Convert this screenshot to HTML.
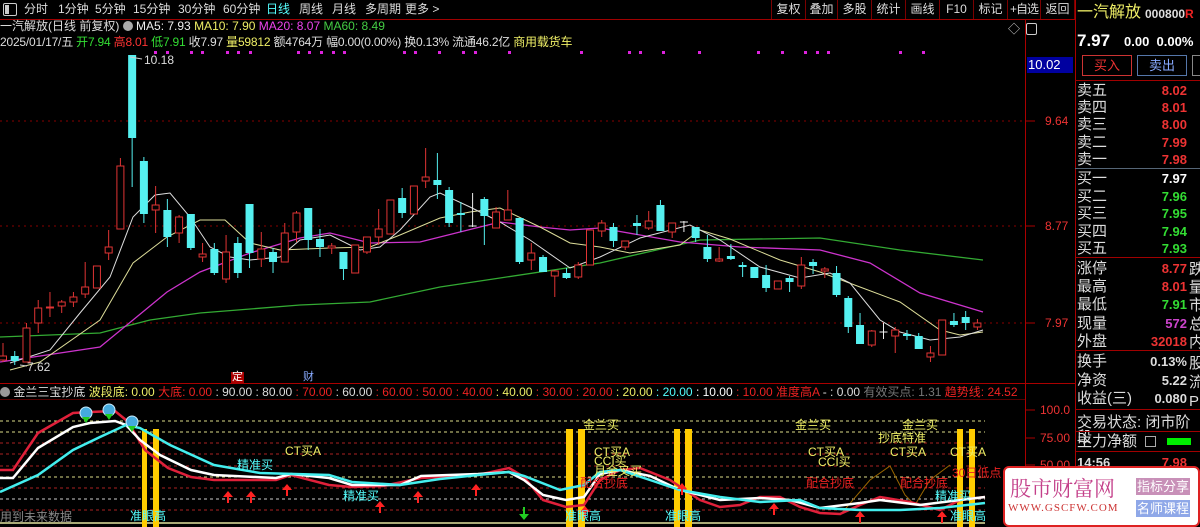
<!DOCTYPE html>
<html><head><meta charset="utf-8">
<style>
*{margin:0;padding:0;box-sizing:border-box}
body{width:1200px;height:527px;background:#000;overflow:hidden;position:relative;font-family:"Liberation Sans","Noto Sans CJK SC",sans-serif;font-size:12px;color:#ddd}
.a{position:absolute;white-space:nowrap;line-height:1}
.tb span{position:absolute;top:3px;font-size:12px;color:#ddd;white-space:nowrap;line-height:1.1}
.btn{position:absolute;top:0;height:19px;border-right:1px solid #7a0000;border-left:1px solid #7a0000;font-size:12px;color:#ddd;text-align:center;line-height:18px;white-space:nowrap;overflow:hidden}
.rp .l{position:absolute;left:1077px;font-size:15px;color:#ddd;line-height:1}
.rp .v{position:absolute;right:13px;font-size:13px;font-weight:bold;line-height:1;text-align:right}
.hl{position:absolute;height:1px;background:#a00000}
</style></head><body>

<svg id="sv" width="1200" height="527" style="position:absolute;left:0;top:0" xmlns="http://www.w3.org/2000/svg"></svg>

<!-- top toolbar -->
<div class="hl" style="left:0;top:19px;width:1075px"></div>
<div class="a" style="left:3px;top:3px;width:14px;height:13px;border:1px solid #ccc;border-radius:2px"></div>
<div class="a" style="left:5px;top:5px;width:4px;height:9px;background:#ccc"></div>
<div class="tb">
<span style="left:24px">分时</span><span style="left:58px">1分钟</span><span style="left:95px">5分钟</span><span style="left:133px">15分钟</span><span style="left:178px">30分钟</span><span style="left:223px">60分钟</span><span style="left:266px;color:#5ff">日线</span><span style="left:299px">周线</span><span style="left:332px">月线</span><span style="left:365px">多周期</span><span style="left:405px">更多 &gt;</span>
</div>
<div class="btn" style="left:771px;width:35px">复权</div>
<div class="btn" style="left:805px;width:33px">叠加</div>
<div class="btn" style="left:837px;width:35px">多股</div>
<div class="btn" style="left:871px;width:35px">统计</div>
<div class="btn" style="left:905px;width:35px">画线</div>
<div class="btn" style="left:939px;width:35px">F10</div>
<div class="btn" style="left:973px;width:35px">标记</div>
<div class="btn" style="left:1007px;width:34px;letter-spacing:-1px">+自选</div>
<div class="btn" style="left:1040px;width:35px">返回</div>

<!-- info lines -->
<div class="a" style="left:0;top:20px;font-size:12px"><span style="color:#ddd">一汽解放(日线 前复权)</span> <span style="display:inline-block;width:10px;height:10px;border-radius:50%;background:#aaa;vertical-align:-1px"></span> <span style="color:#eee">MA5: 7.93</span> <span style="color:#ee6">MA10: 7.90</span> <span style="color:#e4e">MA20: 8.07</span> <span style="color:#4c4">MA60: 8.49</span></div>
<div class="a" style="left:0;top:36px;font-size:12px;letter-spacing:-0.2px"><span style="color:#ddd">2025/01/17/五</span> <span style="color:#3d3">开7.94</span> <span style="color:#f33">高8.01</span> <span style="color:#3d3">低7.91</span> <span style="color:#ddd">收7.97</span> <span style="color:#ee6">量59812</span> <span style="color:#ddd">额4764万 幅0.00(0.00%) 换0.13% 流通46.2亿</span> <span style="color:#ee6">商用载货车</span></div>
<div class="a" style="left:1008px;top:23px;color:#ccc;font-size:12px">◇</div>
<div class="a" style="left:1026px;top:23px;width:11px;height:12px;border:1px solid #ccc;border-radius:2px"></div>

<!-- chart labels -->
<div class="a" style="left:144px;top:54px;color:#ddd;font-size:12px">10.18</div>
<div class="a" style="left:27px;top:361px;color:#ddd;font-size:12px">7.62</div>
<div class="a" style="left:231px;top:372px;background:#a00;color:#fff;font-size:11px;padding:0 1px">定</div>
<div class="a" style="left:303px;top:372px;color:#8af;font-size:11px">财</div>

<!-- axis -->
<div class="a" style="left:1027px;top:57px;width:46px;height:16px;background:#0000a0;color:#fff;font-size:13px;line-height:16px;padding-left:1px">10.02</div>
<div class="a" style="left:1045px;top:115px;color:#e33;font-size:12px">9.64</div>
<div class="a" style="left:1045px;top:220px;color:#e33;font-size:12px">8.77</div>
<div class="a" style="left:1045px;top:317px;color:#e33;font-size:12px">7.97</div>
<div class="a" style="left:1040px;top:404px;color:#e33;font-size:12px">100.0</div>
<div class="a" style="left:1040px;top:432px;color:#e33;font-size:12px">75.00</div>
<div class="a" style="left:1040px;top:459px;color:#e33;font-size:12px">50.00</div>

<!-- indicator title -->
<div class="a" style="left:0;top:386px;font-size:12px;width:1025px;overflow:hidden"><span style="display:inline-block;width:10px;height:10px;border-radius:50%;background:#999;vertical-align:-1px"></span> <span style="color:#ddd">金兰三宝抄底</span> <span style="color:#ee6">波段底: 0.00</span> <span style="color:#e22">大底: 0.00</span> <span style="color:#ddd">: 90.00 : 80.00</span> <span style="color:#e22">: 70.00</span> <span style="color:#ddd">: 60.00</span> <span style="color:#e22">: 60.00 : 50.00 : 40.00</span> <span style="color:#ee6">: 40.00</span> <span style="color:#e22">: 30.00 : 20.00</span> <span style="color:#ee6">: 20.00</span> <span style="color:#5ff">: 20.00</span> <span style="color:#fff">: 10.00</span> <span style="color:#e22">: 10.00 准度高A</span> <span style="color:#ddd">- : 0.00</span> <span style="color:#777">有效买点: 1.31</span> <span style="color:#e22">趋势线: 24.52</span></div>

<!-- indicator labels -->
<div class="a" style="left:285px;top:445px;color:#ee6">CT买A</div>
<div class="a" style="left:237px;top:459px;color:#5ff">精准买</div>
<div class="a" style="left:343px;top:490px;color:#5ff">精准买</div>
<div class="a" style="left:130px;top:510px;color:#5ff">准眼高</div>
<div class="a" style="left:0;top:511px;color:#888">用到未来数据</div>
<div class="a" style="left:583px;top:419px;color:#ee6">金兰买</div>
<div class="a" style="left:594px;top:446px;color:#ee6">CT买A</div>
<div class="a" style="left:594px;top:455px;color:#ee6">CCI买</div>
<div class="a" style="left:594px;top:465px;color:#ee6">月金叉买</div>
<div class="a" style="left:580px;top:477px;color:#e22">配合抄底</div>
<div class="a" style="left:565px;top:510px;color:#5ff">准眼高</div>
<div class="a" style="left:665px;top:510px;color:#5ff">准眼高</div>
<div class="a" style="left:795px;top:419px;color:#ee6">金兰买</div>
<div class="a" style="left:808px;top:446px;color:#ee6">CT买A</div>
<div class="a" style="left:818px;top:456px;color:#ee6">CCI买</div>
<div class="a" style="left:806px;top:477px;color:#e22">配合抄底</div>
<div class="a" style="left:902px;top:419px;color:#ee6">金兰买</div>
<div class="a" style="left:878px;top:432px;color:#ee6">抄底特准</div>
<div class="a" style="left:890px;top:446px;color:#ee6">CT买A</div>
<div class="a" style="left:900px;top:477px;color:#e22">配合抄底</div>
<div class="a" style="left:950px;top:446px;color:#ee6">CT买A</div>
<div class="a" style="left:952px;top:467px;color:#e22">30日低点</div>
<div class="a" style="left:935px;top:490px;color:#5ff">精准买</div>
<div class="a" style="left:950px;top:510px;color:#5ff">准眼高</div>

<!-- right panel -->
<div class="rp">
<div class="a" style="left:1077px;top:5px;font-size:16px;color:#ee6">一汽解放</div>
<div class="a" style="left:1145px;top:8px;font-size:12px;font-weight:bold;color:#ddd">000800<span style="color:#e22">R</span></div>
<div class="a" style="left:1077px;top:32px;font-size:17px;font-weight:bold;color:#fff">7.97</div>
<div class="a" style="left:1124px;top:35px;font-size:13px;font-weight:bold;color:#fff">0.00&nbsp;&nbsp;0.00%</div>
<div class="a" style="left:1082px;top:55px;width:50px;height:21px;border:1px solid #c33;color:#e33;font-size:13px;text-align:center;line-height:19px">买入</div>
<div class="a" style="left:1137px;top:55px;width:50px;height:21px;border:1px solid #57a;color:#8af;font-size:13px;text-align:center;line-height:19px">卖出</div>
<div class="a" style="left:1192px;top:55px;width:20px;height:21px;border:1px solid #888"></div>
<div class="hl" style="left:1075px;top:80px;width:125px"></div>
<div class="l" style="top:83px">卖五</div><div class="v" style="top:84px;color:#e33">8.02</div>
<div class="l" style="top:100px">卖四</div><div class="v" style="top:101px;color:#e33">8.01</div>
<div class="l" style="top:117px">卖三</div><div class="v" style="top:118px;color:#e33">8.00</div>
<div class="l" style="top:135px">卖二</div><div class="v" style="top:136px;color:#e33">7.99</div>
<div class="l" style="top:152px">卖一</div><div class="v" style="top:153px;color:#e33">7.98</div>
<div class="hl" style="left:1075px;top:168px;width:125px;background:#567"></div>
<div class="l" style="top:171px">买一</div><div class="v" style="top:172px;color:#fff">7.97</div>
<div class="l" style="top:189px">买二</div><div class="v" style="top:190px;color:#3d3">7.96</div>
<div class="l" style="top:206px">买三</div><div class="v" style="top:207px;color:#3d3">7.95</div>
<div class="l" style="top:224px">买四</div><div class="v" style="top:225px;color:#3d3">7.94</div>
<div class="l" style="top:241px">买五</div><div class="v" style="top:242px;color:#3d3">7.93</div>
<div class="hl" style="left:1075px;top:257px;width:125px"></div>
<div class="l" style="top:261px">涨停</div><div class="v" style="top:262px;color:#e33">8.77</div>
<div class="l" style="top:279px">最高</div><div class="v" style="top:280px;color:#e33">8.01</div>
<div class="l" style="top:297px">最低</div><div class="v" style="top:298px;color:#3d3">7.91</div>
<div class="l" style="top:316px">现量</div><div class="v" style="top:317px;color:#c4c">572</div>
<div class="l" style="top:334px">外盘</div><div class="v" style="top:335px;color:#e33">32018</div>
<div class="a" style="left:1189px;top:261px;font-size:15px;line-height:18.2px;color:#ddd">跌<br>量<br>市<br>总<br>内</div>
<div class="hl" style="left:1075px;top:350px;width:125px"></div>
<div class="l" style="top:354px">换手</div><div class="v" style="top:355px;color:#ddd">0.13%</div>
<div class="l" style="top:373px">净资</div><div class="v" style="top:374px;color:#ddd">5.22</div>
<div class="l" style="top:391px">收益(三)</div><div class="v" style="top:392px;color:#ddd">0.080</div>
<div class="a" style="left:1189px;top:354px;font-size:15px;line-height:19px;color:#ddd">股<br>流<br>P</div>
<div class="hl" style="left:1075px;top:409px;width:125px"></div>
<div class="l" style="top:415px">交易状态: 闭市阶段</div>
<div class="hl" style="left:1075px;top:431px;width:125px"></div>
<div class="l" style="top:434px">主力净额</div>
<div class="a" style="left:1145px;top:436px;width:11px;height:11px;border:1px solid #aaa"></div>
<div class="a" style="left:1167px;top:438px;width:24px;height:7px;background:#0e0"></div>
<div class="hl" style="left:1075px;top:451px;width:125px"></div>
<div class="a" style="left:1077px;top:456px;font-size:13px;font-weight:bold;color:#ddd">14:56</div>
<div class="v" style="top:456px;color:#e33">7.98</div>
</div>

<!-- watermark -->
<div class="a" style="left:1003px;top:466px;width:197px;height:61px;background:#fff;border:2px solid #d22;border-radius:6px"></div>
<div class="a" style="left:1010px;top:478px;font-size:21px;color:#c4408a;font-family:'Noto Serif CJK SC','Liberation Serif',serif">股市财富网</div>
<div class="a" style="left:1008px;top:503px;font-size:11px;color:#c33;font-family:'Liberation Serif',serif;letter-spacing:1px">WWW.GSCFW.COM</div>
<div class="a" style="left:1136px;top:478px;width:54px;height:17px;background:#c890b8;color:#fff;font-size:13px;text-align:center;line-height:17px">指标分享</div>
<div class="a" style="left:1136px;top:500px;width:54px;height:17px;background:#8fa8e8;color:#fff;font-size:13px;text-align:center;line-height:17px">名师课程</div>

<script>
var s=[];
function L(x1,y1,x2,y2,c,w,d){s.push('<line x1="'+x1+'" y1="'+y1+'" x2="'+x2+'" y2="'+y2+'" stroke="'+c+'" stroke-width="'+(w||1)+'"'+(d?' stroke-dasharray="'+d+'"':'')+'/>');}
function P(pts,c,w){s.push('<polyline fill="none" stroke="'+c+'" stroke-width="'+(w||1)+'" points="'+pts+'"/>');}
[121,226,323].forEach(function(y){L(0,y,1025,y,'#800','1','2 4');});
L(1025.5,19,1025.5,527,'#a00');L(1075.5,0,1075.5,527,'#a00');
L(0,383.5,1075,383.5,'#a00');L(0,399.5,1025,399.5,'#500');
[121,226,323,410,438,465].forEach(function(y){L(1025,y,1035,y,'#a00');});
[155,167,191,202,227,238,250,298,309,321,333,344,404,415,439,463,475,509,581,629,640,663,699,758,782,805,817,828,900,923].forEach(function(x){s.push('<rect x="'+(x-1)+'" y="51" width="3" height="3" fill="#d2d"/>');});
P('0,337 100,333 150,320 200,313 300,305 370,302 440,287 500,278 600,263 700,240 820,238 900,250 983,260','#3a3',1.3);
P('0,362 100,347 133,320 167,292 200,272 250,253 300,238 330,233 370,243 420,242 460,232 500,222 540,227 570,230 600,228 680,242 740,247 820,250 870,263 920,293 983,312','#c3c',1.3);
P('10,370 40,362 100,320 133,263 167,237 200,220 225,220 250,243 280,250 330,248 370,247 400,235 440,218 470,212 500,208 540,227 570,243 600,247 630,253 680,245 700,230 730,239 780,260 820,272 860,287 900,302 940,330 960,335 983,332','#dd9',1);
P('10,363 50,350 80,313 110,277 133,217 155,195 170,193 190,217 210,247 230,257 250,260 280,257 300,240 330,235 360,250 380,247 400,230 430,197 440,193 470,207 500,222 530,240 570,268 600,257 640,238 690,225 720,240 760,267 800,278 830,273 850,283 880,320 900,332 930,340 960,337 983,330','#ddd',1);
var C=[[356,360,343,362,'r'],[356,361,351,365,'c'],[328,362,323,362,'r'],[308,323,300,333,'r'],[307,308,292,317,'r'],[302,306,300,313,'r'],[297,302,292,307,'r'],[287,294,262,298,'r'],[266,288,266,288,'r'],[247,253,230,260,'r'],[166,229,158,229,'r'],[55,138,55,187,'c'],[161,214,157,223,'c'],[205,210,186,233,'r'],[210,237,199,247,'c'],[217,233,215,243,'r'],[214,248,214,250,'c'],[254,257,243,262,'r'],[249,273,243,275,'c'],[252,279,235,283,'r'],[243,273,237,278,'c'],[204,253,204,268,'c'],[249,259,232,267,'r'],[252,262,248,273,'c'],[233,262,223,262,'r'],[213,232,211,242,'r'],[208,240,208,250,'c'],[239,247,229,257,'c'],[246,248,243,254,'r'],[252,269,252,280,'c'],[245,273,245,273,'r'],[237,252,237,254,'r'],[229,237,209,245,'r'],[200,234,200,234,'r'],[198,213,188,218,'c'],[186,214,186,214,'r'],[177,181,148,188,'r'],[180,185,153,199,'c'],[190,223,187,227,'c'],[213,215,202,232,'c'],[226,227,193,227,'w'],[199,216,197,245,'c'],[212,228,207,228,'r'],[210,220,190,220,'r'],[218,262,218,264,'c'],[253,260,243,270,'r'],[257,272,255,272,'c'],[271,276,270,297,'r'],[273,278,268,279,'c'],[265,277,262,279,'r'],[230,265,230,265,'r'],[223,231,220,237,'r'],[227,241,223,247,'c'],[241,247,241,250,'r'],[223,226,215,235,'c'],[221,228,211,230,'r'],[205,231,200,231,'c'],[223,232,223,238,'r'],[222,223,221,232,'w'],[227,238,227,242,'c'],[247,259,235,262,'c'],[259,261,247,262,'r'],[256,259,244,260,'c'],[265,265,262,277,'c'],[267,278,267,278,'c'],[275,288,265,292,'c'],[281,289,281,289,'r'],[278,282,276,292,'c'],[265,286,257,289,'r'],[262,266,259,274,'c'],[269,271,267,278,'r'],[273,295,266,297,'c'],[298,327,296,333,'c'],[325,344,313,344,'c'],[331,345,330,347,'r'],[332,332,323,339,'w'],[330,336,327,353,'r'],[334,335,330,340,'c'],[336,349,333,349,'c'],[353,357,346,362,'r'],[320,355,320,355,'r'],[321,325,313,327,'c'],[317,323,311,330,'c'],[323,327,319,330,'r']];
C.forEach(function(c,i){var x=3+i*11.74,t=c[4],col=t=='r'?'#e03434':(t=='c'?'#55f0f0':'#eee');
L(x,c[2],x,c[3],col);
if(t=='r')s.push('<rect x="'+(x-3.5)+'" y="'+c[0]+'" width="7" height="'+Math.max(1,c[1]-c[0])+'" fill="#000" stroke="'+col+'"/>');
else if(t=='c')s.push('<rect x="'+(x-4)+'" y="'+c[0]+'" width="8" height="'+Math.max(2,c[1]-c[0])+'" fill="'+col+'"/>');
else L(x-4,c[0],x+4,c[0],col);
});
L(130,57,142,59,'#ccc');L(20,365,27,366,'#ccc');
[[421,'#dd8'],[432,'#dd8'],[443,'#a22'],[454,'#a22'],[466,'#a22'],[477,'#dd8'],[488,'#a22'],[499,'#ccc'],[510,'#a22']].forEach(function(a){L(0,a[0],985,a[0],a[1],1,'3 3');});
L(0,523,985,523,'#aa7',2);
[[142,147],[153,159],[566,573],[578,585],[674,680],[685,692],[957,963],[969,975]].forEach(function(b){s.push('<rect x="'+b[0]+'" y="429" width="'+(b[1]-b[0])+'" height="98" fill="#fc0"/>');});
P('840,515 870,480 890,466 905,495 915,505 930,480 950,465','#960',1);
P('0,470 13,470 38,433 73,413 90,412 115,411 126,420 134,432 145,450 168,468 191,477 214,480 276,480 291,475 329,485 352,487 383,486 421,478 478,475 509,468 524,477 543,500 566,507 584,505 600,480 620,470 640,468 670,480 700,500 720,507 740,505 760,497 780,497 800,507 820,513 840,514 860,505 880,497 910,502 940,510 960,500 985,497','#e0203a',2.5);
P('0,478 13,478 38,448 73,427 90,423 115,421 126,425 140,440 160,455 191,470 214,475 276,478 291,474 329,478 352,485 400,485 421,476 478,474 509,472 524,480 543,495 566,500 584,497 600,474 620,470 650,476 680,490 720,500 760,498 790,500 820,508 860,503 880,500 920,505 960,500 985,497','#fff',2.5);
P('0,492 38,475 73,450 100,437 126,425 140,428 170,445 214,465 260,473 329,475 352,482 400,485 440,479 478,475 509,472 524,476 560,490 584,485 600,472 620,470 650,480 680,490 720,497 760,502 800,500 820,508 860,510 900,510 940,508 985,503','#4ee',2.5);
[[228,500],[251,500],[287,493],[380,510],[418,500],[476,493],[585,515],[682,492],[774,512],[860,520],[942,520]].forEach(function(a){var x=a[0],y=a[1];s.push('<polygon points="'+x+','+(y-9)+' '+(x-5)+','+(y-3)+' '+(x+5)+','+(y-3)+'" fill="#f22"/>');L(x,y-4,x,y+3,'#f22',2);});
s.push('<polygon points="524,520 519,514 529,514" fill="#2c2"/>');L(524,507,524,515,'#2c2',2);
[[86,413],[109,410],[132,422]].forEach(function(b){s.push('<circle cx="'+b[0]+'" cy="'+b[1]+'" r="6" fill="#4ad" stroke="#cef"/><polygon points="'+b[0]+','+(b[1]+10)+' '+(b[0]-4)+','+(b[1]+4)+' '+(b[0]+4)+','+(b[1]+4)+'" fill="#2c2"/>');});
document.getElementById('sv').innerHTML=s.join('');
</script>
</body></html>
